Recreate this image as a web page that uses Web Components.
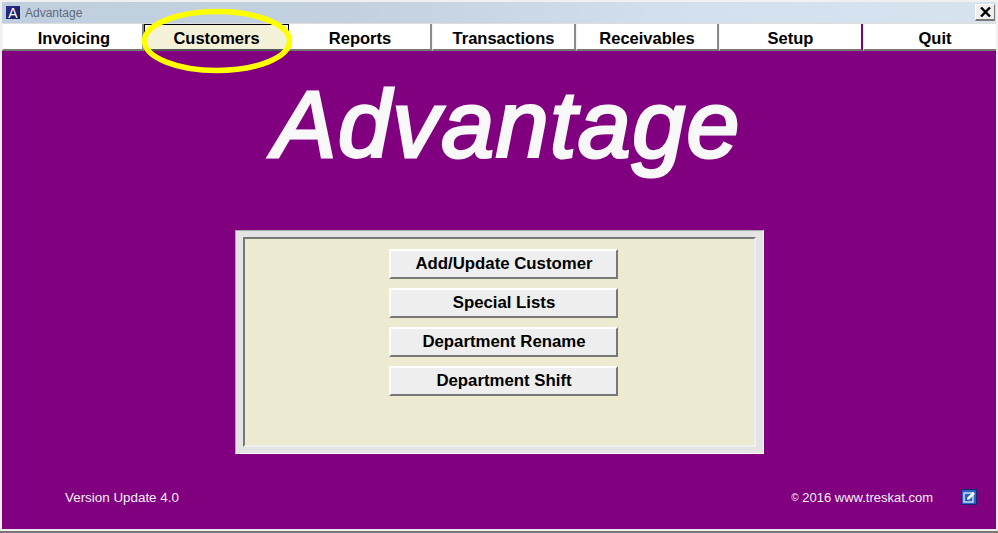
<!DOCTYPE html>
<html><head><meta charset="utf-8"><style>
html,body{margin:0;padding:0;background:#fff}
body{width:998px;height:533px;overflow:hidden;font-family:"Liberation Sans",Arial,sans-serif}
</style></head><body>
<app-window>
<title-bar slot="title">Advantage</title-bar>
<menu-bar slot="menu">
<menu-tab style="--w:142px;--pad:3px">Invoicing</menu-tab>
<menu-tab active style="--w:145px">Customers</menu-tab>
<menu-tab style="--w:143px">Reports</menu-tab>
<menu-tab style="--w:144px">Transactions</menu-tab>
<menu-tab style="--w:143px">Receivables</menu-tab>
<menu-tab divider style="--w:144px">Setup</menu-tab>
<menu-tab style="--w:133px;--pad:10px" last>Quit</menu-tab>
</menu-bar>
<main-area slot="main">
<big-logo>Advantage</big-logo>
<action-panel>
<action-button>Add/Update Customer</action-button>
<action-button>Special Lists</action-button>
<action-button>Department Rename</action-button>
<action-button>Department Shift</action-button>
</action-panel>
<foot-bar><span slot="left">Version Update 4.0</span><span slot="right"><small style="font-size:10px;vertical-align:1px">©</small> 2016 www.treskat.com</span></foot-bar>
</main-area>
</app-window>
<script>
function def(name,css,html){
  customElements.define(name,class extends HTMLElement{
    constructor(){super();const s=this.attachShadow({mode:'open'});s.innerHTML='<style>'+css+'</style>'+html;}
  });
}
def('app-window',`
:host{display:flex;flex-direction:column;width:998px;height:533px;box-sizing:border-box;position:relative;background:#f0f0f0;padding:2px 2px 0 2px}
.bottom{height:4px;margin:0 -2px;background:linear-gradient(#ececec 0 2px,#777 2px 4px);flex:none}
.ring{position:absolute;left:142px;top:9px;width:151px;height:65px;overflow:visible;pointer-events:none}
`,`<slot name="title"></slot><slot name="menu"></slot><slot name="main"></slot><div class="bottom"></div>
<svg class="ring" viewBox="0 0 151 65"><ellipse cx="75" cy="32" rx="72.500" ry="29.500" fill="none" stroke="#ffff00" stroke-width="5.500"/></svg>`);
def('title-bar',`
:host{display:flex;align-items:center;flex:none;height:21px;padding:0 1px 0 4px;background:linear-gradient(90deg,#bfcfde 0,#c3d1df 35%,#d3e1ee 70%,#d6e3ef 100%);font:12px "Liberation Sans",Arial,sans-serif;color:#5f6a80}
.ic{width:14px;height:13px;background:linear-gradient(135deg,#2a2f8c,#141a5c);color:#fff;font:400 14px/14px "Liberation Sans",Arial,sans-serif;text-align:center;margin-right:5px;flex:none}
.t{flex:1}
.x{width:20px;height:17px;box-sizing:border-box;background:#eee;border:1px solid #fff;border-right-color:#777;border-bottom:2px solid #777;display:flex;align-items:center;justify-content:center}
`,`<span class="ic">A</span><span class="t"><slot></slot></span><span class="x"><svg width="11" height="10" viewBox="0 0 11 10"><path d="M1 .5 10 9.500M10 .5 1 9.500" stroke="#000" stroke-width="2.400" fill="none"/></svg></span>`);
def('menu-bar',`:host{display:flex;flex:none;height:27px;background:#fff;border-top:1px solid #ddd}`,`<slot></slot>`);
def('menu-tab',`
:host{display:block;flex:none;width:var(--w);box-sizing:border-box;height:27px;padding-left:var(--pad,0);background:#fff;border-right:2px solid #8a8a8a;border-bottom:2px solid #777;border-left:1px solid #f4f4f4;text-align:center;font:bold 16.500px/28px "Liberation Sans",Arial,sans-serif;color:#000}
:host([active]){background:#f3f2d8;border:1px solid #000;border-bottom:2px solid #555;line-height:27px}
:host([divider]){border-right-color:#800080}
:host([last]){border-right:none}
`,`<slot></slot>`);
def('main-area',`:host{display:flex;flex-direction:column;align-items:center;flex:1;min-height:0;background:#800080;box-sizing:border-box}`,`<slot></slot>`);
def('big-logo',`:host{display:block;flex:none;margin-top:18px;height:112px;margin-left:16px;font:italic 400 95px/110px "Liberation Sans",Arial,sans-serif;-webkit-text-stroke:3px #f8f8f8;letter-spacing:1.500px;color:#f8f8f8;text-align:center}`,`<slot></slot>`);
def('action-panel',`
:host{display:block;flex:none;margin-top:49px;width:529px;height:224px;box-sizing:border-box;background:#e3e4e3;border:1px solid #fff;border-top-color:#a8a8a8;border-left-color:#a8a8a8;padding:6px 7px}
.in{height:100%;box-sizing:border-box;background:#ecead1;border:2px solid #777;border-right:2px solid #f0f0f0;border-bottom:2px solid #f0f0f0;display:flex;flex-direction:column;align-items:center;gap:9px;padding:10px 0 0 8px}
`,`<div class="in"><slot></slot></div>`);
def('action-button',`
:host{display:block;flex:none;width:229px;height:30px;box-sizing:border-box;padding-left:2px;background:#eee;border:2px solid #fff;border-right-color:#777;border-bottom-color:#777;text-align:center;font:bold 16.800px/26px "Liberation Sans",Arial,sans-serif;color:#000}
`,`<slot></slot>`);
def('foot-bar',`
:host{display:flex;align-self:stretch;align-items:center;flex:none;margin-top:33px;height:20px;padding:0 19px 0 63px;font:13.400px "Liberation Sans",Arial,sans-serif;color:#f4f0f8}
.l{flex:1}.r{margin-right:28px;font-size:13px}
svg{display:block}
`,`<span class="l"><slot name="left"></slot></span><span class="r"><slot name="right"></slot></span>
<svg width="16" height="16" viewBox="0 0 16 16"><rect width="16" height="16" fill="#14286e"/><rect x="1" y="1" width="14" height="14" rx="1" fill="#2a62c0"/><rect x="3" y="4" width="9" height="9" fill="none" stroke="#e4effa" stroke-width="1.300"/><path d="M6 11 6.500 8.500 12 3l2 1.800-5.500 5.500z" fill="#fff"/><path d="M5.500 12 6 10.500 7 11.500z" fill="#14286e"/></svg>`);
</script>
</body></html>
